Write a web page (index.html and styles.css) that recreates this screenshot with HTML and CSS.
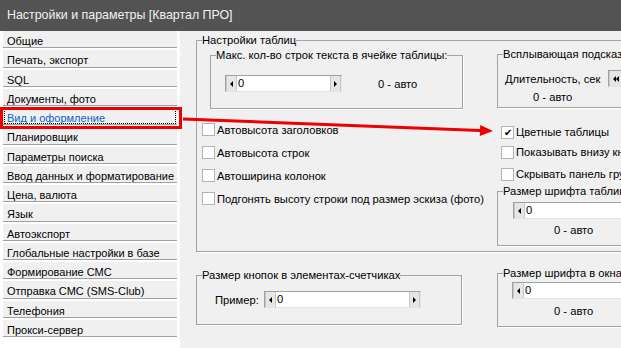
FILE: index.html
```html
<!DOCTYPE html>
<html lang="ru">
<head>
  <meta charset="UTF-8">
  <title>Настройки и параметры [Квартал ПРО]</title>
  <link rel="stylesheet" href="styles.css">
</head>
<body>
<div class="window">
  <div class="titlebar">Настройки и параметры [Квартал ПРО]</div>

  <div class="main">
    <ul class="nav">
      <li>Общие</li>
      <li>Печать, экспорт</li>
      <li>SQL</li>
      <li>Документы, фото</li>
      <li class="active">Вид и оформление</li>
      <li>Планировщик</li>
      <li>Параметры поиска</li>
      <li>Ввод данных и форматирование</li>
      <li>Цена, валюта</li>
      <li>Язык</li>
      <li>Автоэкспорт</li>
      <li>Глобальные настройки в базе</li>
      <li>Формирование СМС</li>
      <li>Отправка СМС (SMS-Club)</li>
      <li>Телефония</li>
      <li>Прокси-сервер</li>
    </ul>

    <div class="panel">
      <fieldset class="group group-tables">
        <legend>Настройки таблиц</legend>
        <div class="cols">
          <div class="col-left">
            <fieldset class="group group-rows">
              <legend>Макс. кол-во строк текста в ячейке таблицы:</legend>
              <div class="group-body row">
                <div class="spin spin-rows"><span class="spin-btn"><i class="tri-left"></i></span><span class="spin-val">0</span><span class="spin-btn"><i class="tri-right"></i></span></div>
                <span class="hint-rows">0 - авто</span>
              </div>
            </fieldset>
            <label class="check check-first"><span class="box"></span>Автовысота заголовков</label>
            <label class="check"><span class="box"></span>Автовысота строк</label>
            <label class="check"><span class="box"></span>Автоширина колонок</label>
            <label class="check check-last"><span class="box"></span>Подгонять высоту строки под размер эскиза (фото)</label>
          </div>

          <div class="col-right">
            <fieldset class="group group-tip">
              <legend>Всплывающая подсказка</legend>
              <div class="group-body">
                <div class="row">
                  <span class="tip-label">Длительность, сек</span>
                  <div class="spin spin-tip"><span class="spin-btn spin-btn-wide"><i class="tri-left"></i><i class="tri-left"></i></span><span class="spin-val">0</span></div>
                </div>
                <div class="hint-tip">0 - авто</div>
              </div>
            </fieldset>
            <label class="check check-r1"><span class="box checked">&#10004;</span>Цветные таблицы</label>
            <label class="check check-r2"><span class="box"></span>Показывать внизу кнопки</label>
            <label class="check check-r3"><span class="box"></span>Скрывать панель группировки</label>
            <fieldset class="group group-font">
              <legend>Размер шрифта таблиц</legend>
              <div class="group-body">
                <div class="spin spin-wide"><span class="spin-btn"><i class="tri-left"></i></span><span class="spin-val">0</span></div>
                <div class="hint-font">0 - авто</div>
              </div>
            </fieldset>
          </div>
        </div>
      </fieldset>

      <div class="bottom-row">
        <fieldset class="group group-buttons">
          <legend>Размер кнопок в элементах-счетчиках</legend>
          <div class="group-body row">
            <span class="sample-label">Пример:</span>
            <div class="spin spin-sample"><span class="spin-btn"><i class="tri-left"></i></span><span class="spin-val">0</span><span class="spin-btn"><i class="tri-right"></i></span></div>
          </div>
        </fieldset>
        <fieldset class="group group-winfont">
          <legend>Размер шрифта в окнах</legend>
          <div class="group-body">
            <div class="spin spin-wide"><span class="spin-btn"><i class="tri-left"></i></span><span class="spin-val">0</span></div>
            <div class="hint-font">0 - авто</div>
          </div>
        </fieldset>
      </div>
    </div>
  </div>

  <!-- пометка на скриншоте -->
  <div class="mark-box"></div>
  <svg class="mark-arrow" width="621" height="348" viewBox="0 0 621 348">
    <line x1="183" y1="119" x2="480" y2="130.5" stroke="#ee0000" stroke-width="3"/>
    <polygon points="493,131 479.8,136 480.2,125" fill="#ee0000"/>
  </svg>
</div>
</body>
</html>
```

FILE: styles.css
```css
body {
  margin: 0;
  font-family: "Liberation Sans", Arial, sans-serif;
  font-size: 11.2px;
  color: #000;
  background: #f0f0f0;
}
.window {
  position: relative;
  width: 621px;
  height: 348px;
  overflow: hidden;
  background: #f0f0f0;
}
.titlebar {
  height: 31px;
  line-height: 30px;
  padding-left: 7px;
  background: #535353;
  color: #f2f2f2;
  font-size: 12.4px;
}
.main {
  display: flex;
  height: 317px;
}

/* левое меню */
.nav {
  list-style: none;
  margin: 0;
  padding: 0;
  width: 180px;
  flex: none;
  background: #fff;
}
.nav li {
  height: 17.27px;
  line-height: 14px;
  padding: 3px 0 0 4px;
  box-sizing: border-box;
  margin: 0 3px 2px 3px;
  background: #f0f0f0;
  border-bottom: 1px solid #a0a0a0;
  font-size: 11px;
  white-space: nowrap;
}
.nav li.active {
  color: #0a64c8;
  outline: 1px dotted #000;
  outline-offset: -2px;
}

/* правая часть */
.panel {
  flex: 1;
  min-width: 0;
  padding: 2px 0 0 16px;
  overflow: hidden;
}
.group {
  margin: 0;
  padding: 0;
  border: 1px solid #a3a3a3;
  box-shadow: 1px 1px 0 #fff;
  min-width: 0;
}
.group legend {
  padding: 0;
  margin-left: 5px;
  line-height: 14px;
  white-space: nowrap;
}
.group-tables {
  width: 500px;
  height: 219px;
  box-sizing: border-box;
}
.cols {
  display: grid;
  grid-template-columns: 295px 200px;
  padding-left: 5px;
}
.col-left {
  padding-top: 1px;
}
.group-rows {
  margin-left: 8px;
  width: 253px;
  box-sizing: border-box;
}
.group-rows .group-body {
  padding: 13px 0 16px 14px;
}
.row {
  display: flex;
  align-items: center;
}
.hint-rows {
  margin-left: 36px;
}

/* спин-редактор */
.spin {
  display: flex;
  height: 17px;
  box-sizing: border-box;
  background: #fff;
  border: 1px solid;
  border-color: #a0a0a0 #e3e3e3 #e3e3e3 #a0a0a0;
}
.spin-btn {
  width: 9px;
  flex: none;
  display: flex;
  align-items: center;
  justify-content: center;
  background: #e6e6e6;
  border: 1px solid #c8c8c8;
  border-width: 0 1px;
}
.spin-btn-wide {
  width: 11px;
}
.spin-val {
  flex: 1;
  line-height: 15px;
  padding-left: 1px;
}
.tri-left {
  width: 0;
  height: 0;
  border-top: 3px solid transparent;
  border-bottom: 3px solid transparent;
  border-right: 3px solid #000;
}
.tri-right {
  width: 0;
  height: 0;
  border-top: 3px solid transparent;
  border-bottom: 3px solid transparent;
  border-left: 3px solid #000;
}
.spin-rows {
  width: 117px;
}
.spin-sample {
  width: 157px;
}
.spin-wide {
  width: 200px;
}
.spin-tip {
  width: 60px;
  flex: none;
}

/* флажки */
.check {
  display: flex;
  align-items: center;
  height: 23px;
  white-space: nowrap;
}
.check-first {
  margin-top: 9px;
}
.box {
  width: 13px;
  height: 13px;
  box-sizing: border-box;
  margin-right: 2px;
  flex: none;
  background: #fff;
  border: 1px solid #b4b4b4;
  font-size: 10px;
  line-height: 11px;
  text-align: center;
}
.col-right .check {
  margin-left: 4px;
  height: 20px;
}
.check-r1 {
  margin-top: 14px;
}
.check-r3 {
  margin-top: 2px;
}
.group-tip {
  width: 200px;
  box-sizing: border-box;
}
.group-tip .group-body {
  padding: 9px 0 3px 7px;
}
.tip-label {
  width: 103px;
  flex: none;
  white-space: nowrap;
}
.hint-tip {
  margin: 3px 0 0 28px;
  line-height: 14px;
}
.group-font {
  margin-top: 0;
}
.group-font .group-body {
  padding: 4px 0 8px 15px;
}
.hint-font {
  margin: 4px 0 0 41px;
  line-height: 14px;
}

/* нижний ряд */
.bottom-row {
  display: flex;
  align-items: flex-start;
  margin-top: 16px;
}
.group-buttons {
  width: 266px;
  box-sizing: border-box;
  flex: none;
}
.group-buttons .group-body {
  padding: 9px 0 16px 18px;
}
.sample-label {
  width: 49px;
  flex: none;
}
.group-winfont {
  margin: -2px 0 0 35px;
  width: 200px;
  flex: none;
}
.group-winfont .group-body {
  padding: 2px 0 8px 14px;
}
.group-winfont .hint-font {
  margin-top: 5px;
  margin-left: 42px;
}

/* пометки */
.mark-box {
  position: absolute;
  left: 0;
  top: 107px;
  width: 182px;
  height: 22px;
  box-sizing: border-box;
  border: 3px solid #ee0000;
}
.mark-arrow {
  position: absolute;
  left: 0;
  top: 0;
}
```
